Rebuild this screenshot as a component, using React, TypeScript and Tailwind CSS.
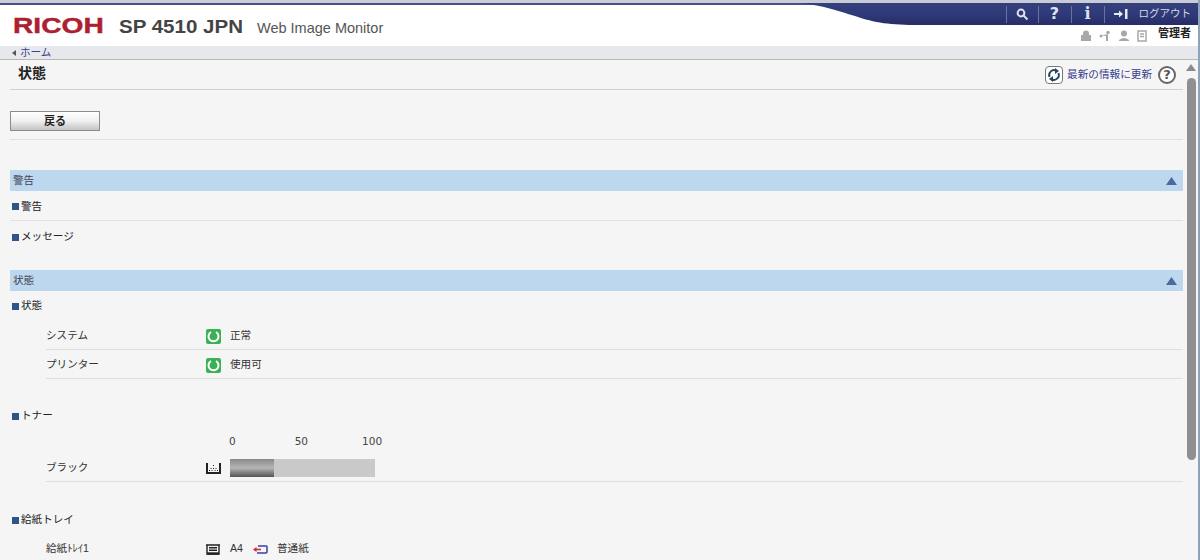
import React from "react";

const jp = "font-['Liberation_Sans','Noto_Sans_CJK_JP',sans-serif]";

function Tri() {
  return <svg width="11" height="8" viewBox="0 0 11 8"><path d="M5.500 0L11 8H0Z" fill="#4a6a9c" /></svg>;
}

function SectionBar({ title }: { title: string }) {
  return (
    <div className="h-[21px] bg-[#bcd7ee] flex items-center justify-between pl-[3px] pr-[6px] text-[10.600px] text-[#445]">
      <span>{title}</span>
      <Tri />
    </div>
  );
}

function SubHead({ title }: { title: string }) {
  return (
    <div className="flex items-center text-[10.600px] text-[#222] h-[20px]">
      <span className="w-[7px] h-[7px] bg-[#2f5488] mr-[2px] ml-[2px]" />
      {title}
    </div>
  );
}

function OkIcon() {
  return (
    <svg width="15" height="15" viewBox="0 0 15 15">
      <rect width="15" height="15" rx="2" fill="#3cb054" />
      <path d="M5 3A5 5 0 1 0 10 3" stroke="#fff" strokeWidth="2" fill="none" />
    </svg>
  );
}

function Row({ label, children }: { label: string; children: React.ReactNode }) {
  return (
    <div className="ml-[36px] h-[29px] pt-[2px] flex items-center border-b border-[#dedede] text-[10.600px] text-[#333]">
      <span className="w-[160px] shrink-0">{label}</span>
      <span className="w-[24px] shrink-0 flex"><OkIcon /></span>
      {children}
    </div>
  );
}

function Gray({ children }: { children: React.ReactNode }) {
  return <svg width="14" height="12" viewBox="0 0 14 12" fill="#a8a8a8">{children}</svg>;
}

export default function App() {
  return (
    <div className={`w-[1200px] h-[560px] overflow-hidden bg-[#f5f5f5] flex flex-col border-r-2 border-[#8fa3b8] ${jp}`}>
      {/* header */}
      <header className="relative h-[46px] shrink-0 bg-white border-t-[3px] border-[#c9cbd6]">
        <svg className="absolute left-0 top-0" width="1198" height="23" viewBox="0 0 1198 23">
          <defs>
            <linearGradient id="band" x1="0" y1="0" x2="0" y2="1">
              <stop offset="0" stopColor="#34407c" />
              <stop offset="0.5" stopColor="#2f3a78" />
              <stop offset="1" stopColor="#262d68" />
            </linearGradient>
          </defs>
          <rect x="0" y="0" width="1198" height="2" fill="#46508f" />
          <path d="M800 0C825 3 838 8 855 13C875 20 890 22 920 22H1198V0Z" fill="url(#band)" />
        </svg>
        <div className="relative flex items-start justify-between h-full">
          <div className="flex items-baseline pt-[10px] pl-[13px]">
            <span className="font-['Liberation_Sans'] font-bold text-[22px] leading-[26px] text-[#ad2030] [-webkit-text-stroke:0.4px_#ad2030] scale-x-[1.28] origin-left w-[106px]">RICOH</span>
            <span className="font-['Liberation_Sans'] font-bold text-[19px] leading-[26px] text-[#444] scale-x-[1.08] origin-left w-[138px]">SP 4510 JPN</span>
            <span className="text-[14.500px] text-[#555]">Web Image Monitor</span>
          </div>
          <div className="flex flex-col items-end pr-[7px]">
            <div className="flex items-center h-[22px] text-white text-[10.500px]">
              <span className="flex h-[17px] items-center border-l border-[#6a72a0] w-[32px] justify-center">
                <svg width="13" height="13" viewBox="0 0 13 13" fill="none" stroke="#dfe2ee" strokeWidth="2"><circle cx="5" cy="5" r="3.400" /><path d="M7.500 7.500L11.500 11.500" /></svg>
              </span>
              <span className="flex h-[17px] items-center border-l border-[#6a72a0] w-[33px] justify-center font-bold text-[16px] font-['DejaVu_Sans'] text-[#dfe2ee]">?</span>
              <span className="flex h-[17px] items-center border-l border-[#6a72a0] w-[33px] justify-center font-bold text-[16px] font-['DejaVu_Serif'] text-[#dfe2ee]">i</span>
              <span className="flex h-[17px] items-center border-l border-[#6a72a0] pl-[9px] gap-[11px] text-[#d5d8e6]">
                <svg width="14" height="10" viewBox="0 0 14 10" fill="#e8eaf2"><path d="M0 4H5V1.500L9 5L5 8.500V6H0Z" /><rect x="11" y="0" width="2.500" height="10" /></svg>
                ログアウト
              </span>
            </div>
            <div className="flex items-center h-[19px] -mt-[1px]">
              <span className="flex items-center gap-[5px] mr-[10px] mt-[4px]">
                <Gray><path d="M4 5V3.500a3 3 0 0 1 6 0V5H12V11H2V5Z" /></Gray>
                <Gray><circle cx="3" cy="6" r="1.500" /><circle cx="10" cy="2.500" r="1.800" /><path d="M3 5.500L10 4V11H8V6Z" /></Gray>
                <Gray><circle cx="7" cy="3.500" r="3" /><path d="M2 11V10Q7 6 12 10V11Z" /></Gray>
                <svg width="12" height="12" viewBox="0 0 12 12" fill="none" stroke="#a8a8a8" strokeWidth="1.500"><rect x="2" y="1" width="8" height="10" /><path d="M4 4H8M4 6.500H8" /></svg>
              </span>
              <span className="font-bold text-[11px] text-[#222]">管理者</span>
            </div>
          </div>
        </div>
      </header>

      {/* breadcrumb */}
      <nav className="h-[14px] shrink-0 bg-[#e6e8ec] border-b border-[#b8b8b8] flex items-center pl-[12px] gap-[4px] text-[10.600px] text-[#3a3f8f]">
        <svg width="4" height="6" viewBox="0 0 4 6"><path d="M4 0V6L0 3Z" fill="#555" /></svg>
        ホーム
      </nav>

      {/* body */}
      <div className="flex flex-1 min-h-0">
        <main className="w-[1183px] pl-[10px] shrink-0">
          <div className="h-[30px] border-b border-[#d0d0d0] flex items-center justify-between pl-[8px] pr-[7px]">
            <h1 className="font-bold text-[14px] text-[#222] -mt-[2px]">状態</h1>
            <div className="flex items-center text-[10.620px] text-[#3a3f8f]">
              <span className="w-[18px] h-[18px] rounded-[4px] border border-[#777] bg-white flex items-center justify-center mr-[4px]">
                <svg width="14" height="14" viewBox="0 0 14 14" fill="none" stroke="#24465f" strokeWidth="1.900">
                  <path d="M2.500 9A5 5 0 0 1 9 2.500" />
                  <path d="M11.500 5A5 5 0 0 1 5 11.500" />
                  <path d="M8 0L12 3L8 6Z" fill="#24465f" stroke="none" />
                  <path d="M6 8L2 11L6 14Z" fill="#24465f" stroke="none" />
                </svg>
              </span>
              最新の情報に更新
              <span className="ml-[6px] w-[18px] h-[18px] rounded-full border-2 border-[#666] bg-white flex items-center justify-center font-bold text-[13px] text-[#555] font-['DejaVu_Sans']">?</span>
            </div>
          </div>

          <div className="h-[50px] border-b border-[#e0e0e0] pt-[21px]">
            <button className="block w-[90px] h-[20px] pt-[1px] border border-[#8c8c8c] bg-gradient-to-b from-white via-[#f0f0f0] to-[#c4c4c4] text-[11px] font-bold text-[#222]">戻る</button>
          </div>

          <section className="mt-[30px]">
            <SectionBar title="警告" />
            <div className="h-[30px] pt-[2px] border-b border-[#e2e2e2] flex items-center"><SubHead title="警告" /></div>
            <div className="h-[30px] pt-[2px] flex items-center"><SubHead title="メッセージ" /></div>
          </section>

          <section className="mt-[19px]">
            <SectionBar title="状態" />
            <div className="h-[30px] flex items-center"><SubHead title="状態" /></div>
            <Row label="システム"><span>正常</span></Row>
            <Row label="プリンター"><span>使用可</span></Row>

            <div className="h-[20px] mt-[27px] flex items-center"><SubHead title="トナー" /></div>
            <div className="ml-[219px] mt-[8px] h-[16px] flex items-center font-['DejaVu_Sans'] text-[10.500px] text-[#444]">
              <span>0</span><span className="ml-[59px]">50</span><span className="ml-[54px]">100</span>
            </div>
            <div className="ml-[36px] h-[32px] pt-[9px] border-b border-[#dedede] text-[10.600px] text-[#333]">
              <div className="flex items-center h-[18px]">
                <span className="w-[160px] shrink-0">ブラック</span>
                <span className="w-[24px] shrink-0 flex">
                  <svg width="15" height="12" viewBox="0 0 15 12" fill="none" stroke="#222"><path d="M1 1V11H14V1" strokeWidth="2" /><path d="M7.500 3V4M5 6V7M7.500 6V7M10 6V7M3.500 8V9M6 8V9M9 8V9M11.500 8V9" strokeWidth="1" /></svg>
                </span>
                <div className="w-[145px] h-[18px] bg-[#c9c9c9]">
                  <div className="w-[44px] h-full bg-gradient-to-b from-[#8a8a8a] via-[#b5b5b5] to-[#555]" />
                </div>
              </div>
            </div>

            <div className="h-[20px] mt-[28px] flex items-center"><SubHead title="給紙トレイ" /></div>
            <div className="ml-[36px] mt-[7px] h-[24px] flex items-center text-[10.600px] text-[#333]">
              <span className="w-[160px] shrink-0">給紙ﾄﾚｲ1</span>
              <span className="w-[24px] shrink-0 flex">
                <svg width="14" height="11" viewBox="0 0 14 11" fill="none" stroke="#222" strokeWidth="1.400"><path d="M1 1V10H13V1M0 1H14" /><path d="M3 3.700H11M3 6.200H11" /><path d="M1 9.500H13" strokeWidth="2.400" /></svg>
              </span>
              <span>A4</span>
              <span className="ml-[10px] mr-[9px] flex">
                <svg width="15" height="9" viewBox="0 0 15 9" fill="none"><path d="M5 1H13.500Q14 1 14 2V7Q14 8 13 8H4" stroke="#3a3f9f" strokeWidth="1.500" /><path d="M8 4.500H2" stroke="#d8283a" strokeWidth="1.600" /><path d="M3.500 2L0 4.500L3.500 7Z" fill="#d8283a" /></svg>
              </span>
              <span>普通紙</span>
            </div>
          </section>
        </main>

        {/* scrollbar */}
        <div className="flex-1 flex flex-col items-center pt-[4px] pl-[1px]">
          <svg width="10" height="7" viewBox="0 0 10 7"><path d="M5 0L10 7H0Z" fill="#8a8a8a" /></svg>
          <div className="w-[9px] h-[382px] rounded-full bg-[#8f8f8f] mt-[7px]" />
        </div>
      </div>
    </div>
  );
}
